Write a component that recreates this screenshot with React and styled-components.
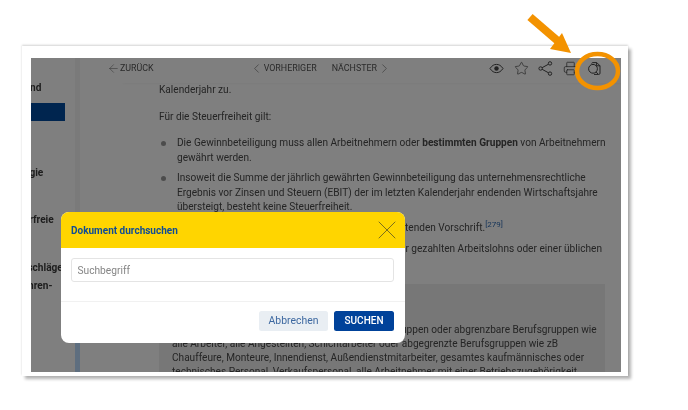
import React from "react";
import styled, { createGlobalStyle } from "styled-components";
import { ArrowLeft, ChevronLeft, ChevronRight, Star, Printer, X } from "lucide-react";

const Global = createGlobalStyle`
  html, body { margin: 0; padding: 0; background: #fff; overflow: hidden; }
  body { font-family: Roboto, "Liberation Sans", sans-serif; }
`;

const Page = styled.div`
  position: relative;
  width: 688px;
  height: 410px;
  padding: 46px 0 0 22px;
  box-sizing: border-box;
  overflow: hidden;
  filter: blur(0.4px);
`;

const Frame = styled.div`
  width: 606px;
  height: 330px;
  box-sizing: border-box;
  padding: 12px 7px 4px 9px;
  background: #fff;
  box-shadow: 3px 3px 3px rgba(0, 0, 0, 0.3), 0 -1px 2px rgba(0, 0, 0, 0.18);
`;

const Viewport = styled.div`
  position: relative;
  isolation: isolate;
  display: flex;
  width: 590px;
  height: 314px;
  overflow: hidden;
  background: #fff;
  color: #4a4a4a;
  font-size: 10.1px;
`;

const Sidebar = styled.nav`
  width: 44px;
  flex: none;
  overflow: hidden;
  background: #fff;
  padding-top: 23px;
  box-sizing: border-box;
`;

const NavItem = styled.div`
  margin-left: ${(p) => p.$indent}px;
  margin-top: ${(p) => p.$top}px;
  height: 14px;
  line-height: 14px;
  font-weight: 700;
  color: #3c3c3c;
  white-space: nowrap;
`;

const NavActive = styled.div`
  width: 34px;
  height: 18px;
  margin-top: 8px;
  background: #004a9f;
`;

const Strip = styled.div`
  width: 5px;
  flex: none;
  display: flex;
  flex-direction: column;
  justify-content: flex-end;
  background: #f4f4f4;
`;

const StripThumb = styled.div`
  height: 60px;
  background: #bcdcff;
`;

const Main = styled.main`
  position: relative;
  flex: 1;
  min-width: 0;
`;

const Toolbar = styled.header`
  position: relative;
  z-index: 1;
  height: 25px;
  box-sizing: border-box;
  display: flex;
  align-items: center;
  padding: 0 0 5px 27px;
  box-shadow: 40px 2px 4px -3px rgba(0, 0, 0, 0.12);
  background: #fff;
  font-size: 8.9px;
  color: #555;
`;

const ToolLink = styled.span`
  display: inline-flex;
  align-items: center;
  margin-left: ${(p) => p.$left ?? 0}px;
  white-space: nowrap;
`;

const ToolIcons = styled.div`
  display: flex;
  align-items: center;
  gap: 9.6px;
  margin-left: 97px;
  color: #444;
`;

const Article = styled.article`
  padding: 0 16px 0 79px;
  line-height: 14.5px;
  white-space: nowrap;
`;

const Para = styled.p`
  margin: ${(p) => p.$top ?? 0}px 0 0;
`;

const Bullets = styled.ul`
  list-style: none;
  margin: 12px 0 0;
  padding: 0;
`;

const Bullet = styled.li`
  position: relative;
  padding-left: 18px;
  margin-top: ${(p) => p.$top ?? 0}px;
  &::before {
    content: "";
    position: absolute;
    left: 2px;
    top: 5px;
    width: 5px;
    height: 5px;
    border-radius: 50%;
    background: #999;
  }
`;

const Note = styled.sup`
  font-size: 8px;
  line-height: 0;
  color: #2f6cb3;
`;

const Callout = styled.section`
  margin-top: 27px;
  height: 120px;
  padding: 39px 0 0 13px;
  box-sizing: border-box;
  background: #eeeeee;
  line-height: 14px;
`;

const Overlay = styled.div`
  position: absolute;
  inset: 0;
  z-index: 2;
  background: rgba(0, 0, 0, 0.5);
`;

const Modal = styled.div`
  position: absolute;
  z-index: 3;
  left: 29.5px;
  top: 154px;
  width: 344px;
  height: 131px;
  display: flex;
  flex-direction: column;
  background: #fff;
  border-radius: 8px;
  overflow: hidden;
`;

const ModalHead = styled.div`
  height: 36px;
  flex: none;
  display: flex;
  align-items: center;
  justify-content: space-between;
  padding: 0 1.5px 0 10.5px;
  background: #ffd500;
`;

const ModalTitle = styled.h2`
  margin: 0;
  font-size: 10px;
  font-weight: 700;
  color: #0f4c96;
`;

const CloseIcon = styled(X)`
  color: #7d6f1a;
`;

const ModalBody = styled.div`
  height: 54px;
  flex: none;
  padding: 10px 10.5px 0;
  box-sizing: border-box;
  border-bottom: 1px solid #f1f1f1;
`;

const SearchInput = styled.input`
  width: 100%;
  height: 24px;
  box-sizing: border-box;
  padding: 0 5.5px;
  border: 1px solid #e4e4e4;
  border-radius: 3px;
  font: 10.2px Roboto, sans-serif;
  &::placeholder { color: #858585; opacity: 1; }
`;

const ModalFoot = styled.div`
  flex: 1;
  display: flex;
  justify-content: flex-end;
  gap: 6px;
  padding: 8.5px 10.5px 0;
`;

const Button = styled.button`
  height: 20.5px;
  width: ${(p) => p.$w}px;
  padding: 0;
  border: 0;
  border-radius: 2.5px;
  font: ${(p) => (p.$primary ? 500 : 400)} ${(p) => (p.$primary ? 10 : 10.4)}px Roboto, sans-serif;
  background: ${(p) => (p.$primary ? "#00429a" : "#e9eef3")};
  color: ${(p) => (p.$primary ? "#fff" : "#3d68a0")};
`;

const Annotation = styled.svg`
  position: absolute;
  left: 0;
  top: 0;
  width: 688px;
  height: 410px;
  pointer-events: none;
`;

const EyeIcon = () => (
  <svg width="15" height="15" viewBox="0 0 15 15" fill="none" stroke="currentColor" strokeWidth="1">
    <path d="M1 7.5 C3 4.4 5.2 3.4 7.5 3.4 C9.8 3.4 12 4.4 14 7.5 C12 10.6 9.8 11.6 7.5 11.6 C5.2 11.6 3 10.6 1 7.5 Z" />
    <circle cx="7.5" cy="7.5" r="2.2" fill="currentColor" stroke="none" />
  </svg>
);

const ShareIcon = () => (
  <svg width="15" height="15" viewBox="0 0 15 15" fill="none" stroke="currentColor" strokeWidth="1">
    <circle cx="2.6" cy="7.5" r="1.7" />
    <circle cx="12" cy="2.4" r="1.7" />
    <circle cx="12" cy="12.6" r="1.7" />
    <path d="M4.1 6.7 L10.5 3.2 M4.1 8.3 L10.5 11.8" />
  </svg>
);

const DocSearch = () => (
  <svg width="15" height="15" viewBox="0 0 15 15" fill="none" stroke="currentColor" strokeWidth="1">
    <path d="M4.5 2.4 Q5 1.6 6 1.6 H9.8 L13 4.8 V12.2 Q13 13.4 11.8 13.4 H7" />
    <path d="M9.6 1.8 V4.8 H13" />
    <circle cx="6" cy="7.8" r="4.4" />
    <path d="M9.2 11 L11 13" />
  </svg>
);

export default function App() {
  return (
    <>
      <Global />
      <Page>
        <Frame>
          <Viewport>
            <Sidebar>
              <NavItem $indent={-44} $top={0}>Hintergrund</NavItem>
              <NavActive />
              <NavItem $indent={-29} $top={45}>Strategie</NavItem>
              <NavItem $indent={-27} $top={33}>steuerfreie</NavItem>
              <NavItem $indent={-38} $top={34}>Mehrzuschläge</NavItem>
              <NavItem $indent={-14} $top={4}>Jahren-</NavItem>
            </Sidebar>
            <Strip><StripThumb /></Strip>
            <Main>
              <Toolbar>
                <ToolLink>
                  <ArrowLeft size={13} strokeWidth={0.9} />ZURÜCK
                </ToolLink>
                <ToolLink $left={95}>
                  <ChevronLeft size={15} strokeWidth={0.9} />VORHERIGER
                </ToolLink>
                <ToolLink $left={15}>
                  NÄCHSTER<ChevronRight size={15} strokeWidth={0.9} />
                </ToolLink>
                <ToolIcons>
                  <EyeIcon />
                  <Star size={15} strokeWidth={1.1} />
                  <ShareIcon />
                  <Printer size={15} strokeWidth={1.2} />
                  <DocSearch />
                </ToolIcons>
              </Toolbar>
              <Article>
                <Para>Kalenderjahr zu.</Para>
                <Para $top={12}>Für die Steuerfreiheit gilt:</Para>
                <Bullets>
                  <Bullet>
                    Die Gewinnbeteiligung muss allen Arbeitnehmern oder <b>bestimmten Gruppen</b> von Arbeitnehmern
                    <br />gewährt werden.
                  </Bullet>
                  <Bullet $top={6}>
                    Insoweit die Summe der jährlich gewährten Gewinnbeteiligung das unternehmensrechtliche
                    <br />Ergebnis vor Zinsen und Steuern (EBIT) der im letzten Kalenderjahr endenden Wirtschaftsjahre
                    <br />übersteigt, besteht keine Steuerfreiheit.
                  </Bullet>
                  <Bullet $top={6}>
                    Die Gewinnbeteiligung gründet auf einer lohngestaltenden Vorschrift.<Note>[279]</Note>
                  </Bullet>
                  <Bullet $top={7}>
                    Die Gewinnbeteiligung darf nicht anstelle des bisher gezahlten Arbeitslohns oder einer üblichen
                  </Bullet>
                </Bullets>
                <Callout>
                  Arbeitnehmer sind alle Arbeitnehmer, bestimmte Gruppen oder abgrenzbare Berufsgruppen wie
                  <br />alle Arbeiter, alle Angestellten, Schichtarbeiter oder abgegrenzte Berufsgruppen wie zB
                  <br />Chauffeure, Monteure, Innendienst, Außendienstmitarbeiter, gesamtes kaufmännisches oder
                  <br />technisches Personal, Verkaufspersonal, alle Arbeitnehmer mit einer Betriebszugehörigkeit
                </Callout>
              </Article>
            </Main>
            <Overlay />
            <Modal>
              <ModalHead>
                <ModalTitle>Dokument durchsuchen</ModalTitle>
                <CloseIcon size={32} strokeWidth={0.75} />
              </ModalHead>
              <ModalBody>
                <SearchInput placeholder="Suchbegriff" readOnly />
              </ModalBody>
              <ModalFoot>
                <Button $w={69}>Abbrechen</Button>
                <Button $w={60} $primary>SUCHEN</Button>
              </ModalFoot>
            </Modal>
          </Viewport>
        </Frame>
        <Annotation viewBox="0 0 688 410">
          <path d="M530 17 L559 42" stroke="#f39200" strokeWidth="8" fill="none" />
          <path d="M571 53 L562 33 L550 49 Z" fill="#f39200" />
          <ellipse cx="597.5" cy="71" rx="20.5" ry="17" fill="none" stroke="#f39200" strokeWidth="4.5" />
        </Annotation>
      </Page>
    </>
  );
}
